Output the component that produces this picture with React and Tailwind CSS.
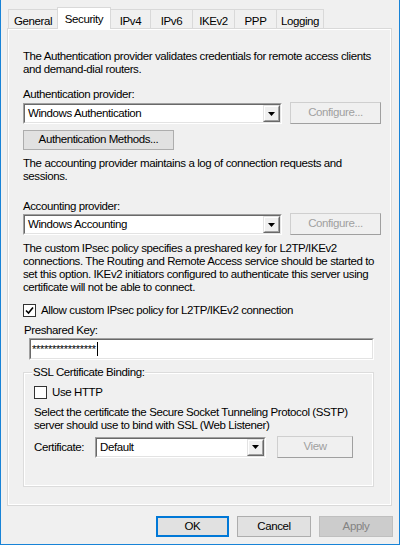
import React from "react";

const font = { fontFamily: '"Liberation Sans", Arial, sans-serif' };

function Arrow() {
  return (
    <svg width="7" height="4" viewBox="0 0 7 4">
      <path d="M0 0h7L3.5 4z" fill="#000" />
    </svg>
  );
}

function Combo({ value, w }) {
  return (
    <div className={`flex h-[21px] ${w} border-t border-l border-t-[#a0a0a0] border-l-[#a0a0a0] border-b border-r border-b-white border-r-white`}>
      <div className="flex flex-1 items-center border-t border-l border-t-[#696969] border-l-[#696969] border-b border-r border-b-[#e3e3e3] border-r-[#e3e3e3] bg-white">
        <span className="flex-1 pl-[3px] leading-[13px]">{value}</span>
        <div className="flex h-full w-[17px] border-t border-l border-t-[#e3e3e3] border-l-[#e3e3e3] border-b border-r border-b-[#696969] border-r-[#696969]">
          <div className="flex flex-1 items-center justify-center border-t border-l border-t-white border-l-white border-b border-r border-b-[#a0a0a0] border-r-[#a0a0a0] bg-[#f0f0f0]">
            <Arrow />
          </div>
        </div>
      </div>
    </div>
  );
}

function DisabledBtn({ label, w, extra = "" }) {
  return (
    <div className={`flex h-[22px] ${w} ${extra} items-center justify-center border border-[#cfcfcf] border-b-[#a0a0a0] border-r-[#a0a0a0] bg-[#f0f0f0] text-[#a0a0a0]`}>
      {label}
    </div>
  );
}

function Check({ checked }) {
  return (
    <div className="flex h-[13px] w-[13px] items-center justify-center border border-[#333] bg-white">
      {checked && (
        <svg width="9" height="9" viewBox="0 0 9 9">
          <path d="M1 4.5l2.5 2.5L8 1.5" stroke="#000" strokeWidth="1.6" fill="none" />
        </svg>
      )}
    </div>
  );
}

const tabs = [
  ["General", "w-[50px]"],
  ["Security", "w-[54px]"],
  ["IPv4", "w-[41px]"],
  ["IPv6", "w-[43px]"],
  ["IKEv2", "w-[43px]"],
  ["PPP", "w-[43px]"],
  ["Logging", "w-[48px]"],
];

export default function App() {
  return (
    <div
      style={font}
      className="relative h-[545px] w-[400px] overflow-hidden border-b border-l border-r border-[#1883d7] bg-[#f0f0f0] text-[11.5px] tracking-[-0.4px] text-black"
    >
      {/* tabs */}
      <div className="flex h-[28px] items-end pl-[7px]">
        {tabs.map(([t, w], i) =>
          t === "Security" ? (
            <div
              key={t}
              className={`relative z-10 -mb-px ml-[-1px] flex h-[22px] ${w} items-start justify-center border-l border-r border-t border-[#d9d9d9] bg-white pt-[3px]`}
            >
              {t}
            </div>
          ) : (
            <div
              key={t}
              className={`flex h-[19px] ${w} ${i === 0 ? "" : "ml-[-1px]"} items-start justify-center border-l border-r border-t border-[#d9d9d9] bg-[#f0f0f0] pt-[3px]`}
            >
              {t}
            </div>
          )
        )}
      </div>

      {/* panel */}
      <div className="ml-[6px] flex h-[478px] w-[385px] flex-col border border-[#d9d9d9] pl-[15px] pr-[10px] pt-[21px] shadow-[inset_0_0_0_1px_#ffffff]">
        <div className="whitespace-nowrap leading-[13px]">
          The Authentication provider validates credentials for remote access clients
          <br />
          and demand-dial routers.
        </div>

        <div className="mt-[12px] leading-[13px]">Authentication provider:</div>
        <div className="mt-[1px] flex h-[22px] items-end">
          <Combo value="Windows Authentication" w="w-[259px]" />
          <DisabledBtn label="Configure..." w="w-[91px]" extra="ml-[8px] self-start" />
        </div>

        <div className="mt-[6px] flex h-[20px] w-[151px] items-center justify-center border border-[#adadad] bg-[#e1e1e1]">
          Authentication Methods...
        </div>

        <div className="mt-[7px] whitespace-nowrap leading-[13px]">
          The accounting provider maintains a log of connection requests and
          <br />
          sessions.
        </div>

        <div className="mt-[17px] leading-[13px]">Accounting provider:</div>
        <div className="flex h-[22px] items-end">
          <Combo value="Windows Accounting" w="w-[259px]" />
          <DisabledBtn label="Configure..." w="w-[91px]" extra="ml-[8px] self-start" />
        </div>

        <div className="mt-[7px] whitespace-nowrap leading-[13px]">
          The custom IPsec policy specifies a preshared key for L2TP/IKEv2
          <br />
          connections. The Routing and Remote Access service should be started to
          <br />
          set this option. IKEv2 initiators configured to authenticate this server using
          <br />
          certificate will not be able to connect.
        </div>

        <div className="mt-[10px] flex items-center gap-[5px] leading-[13px]">
          <Check checked />
          <span>Allow custom IPsec policy for L2TP/IKEv2 connection</span>
        </div>

        <div className="mt-[7px] pl-[1px] leading-[13px]">Preshared Key:</div>
        <div className="ml-[6px] mt-[1px] flex h-[22px] w-[345px] border-t border-l border-t-[#a0a0a0] border-l-[#a0a0a0] border-b border-r border-b-white border-r-white">
          <div className="flex flex-1 items-center border-t border-l border-t-[#696969] border-l-[#696969] border-b border-r border-b-[#e3e3e3] border-r-[#e3e3e3] bg-white pl-[1px]">
            <span className="text-[11px] leading-[10px] tracking-[-0.3px]">****************</span>
            <span className="ml-[1px] h-[14px] w-px bg-black" />
          </div>
        </div>

        {/* group box */}
        <div className="relative mt-[12px] h-[115px] w-[351px] border border-[#dcdcdc] pl-[10px] pt-[13px] shadow-[inset_0_0_0_1px_#ffffff]">
          <span className="absolute left-[8px] top-[-7px] bg-[#f0f0f0] px-[1px] leading-[13px]">
            SSL Certificate Binding:
          </span>
          <div className="flex items-center gap-[5px] leading-[13px]">
            <Check />
            <span>Use HTTP</span>
          </div>
          <div className="mt-[7px] whitespace-nowrap leading-[13px]">
            Select the certificate the Secure Socket Tunneling Protocol (SSTP)
            <br />
            server should use to bind with SSL (Web Listener)
          </div>
          <div className="mt-[4px] flex h-[22px] items-center">
            <span className="w-[61px] leading-[13px]">Certificate:</span>
            <Combo value="Default" w="w-[171px]" />
            <DisabledBtn label="View" w="w-[76px]" extra="ml-[11px]" />
          </div>
        </div>
      </div>

      {/* bottom buttons */}
      <div className="mt-[10px] flex justify-end pr-[6px]">
        <div className="flex h-[21px] w-[73px] items-center justify-center border-2 border-[#0078d7] bg-[#e1e1e1]">
          OK
        </div>
        <div className="ml-[8px] flex h-[21px] w-[74px] items-center justify-center border border-[#adadad] bg-[#e1e1e1]">
          Cancel
        </div>
        <div className="ml-[8px] flex h-[21px] w-[74px] items-center justify-center border border-[#bfbfbf] bg-[#cccccc] text-[#838383]">
          Apply
        </div>
      </div>
    </div>
  );
}
